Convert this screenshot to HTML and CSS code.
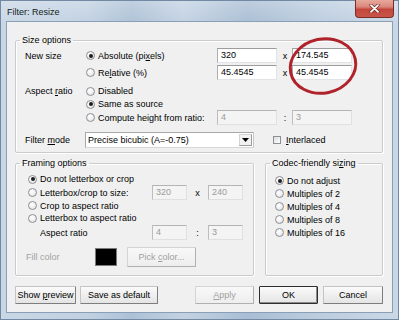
FILE: index.html
```html
<!DOCTYPE html>
<html>
<head>
<meta charset="utf-8">
<link rel="stylesheet" href="styles.css">
</head>
<body>
<div class="window">
  <div class="titlebar">
    <span class="title">Filter: Resize</span>
    <div class="close">
      <svg width="11" height="9" viewBox="0 0 11 9"><path d="M2 1.2 L9 7.8 M9 1.2 L2 7.8" stroke="#6b2a26" stroke-width="3.2" stroke-linecap="round"/><path d="M2 1.2 L9 7.8 M9 1.2 L2 7.8" stroke="#fff" stroke-width="1.8" stroke-linecap="round"/></svg>
    </div>
  </div>
  <div class="client">
    <fieldset class="group size">
      <legend>Size options</legend>
      <div class="gbody size-body">
        <div class="row r1">
          <span class="lbl">New size</span>
          <span class="opt"><span class="rb on"></span><span>Absolute (pi<u>x</u>els)</span></span>
          <span class="tb w60">320</span><span class="sep s15">x</span><span class="tb w60">174.545</span>
        </div>
        <div class="row r2">
          <span class="lbl"></span>
          <span class="opt"><span class="rb"></span><span>Re<u>l</u>ative (%)</span></span>
          <span class="tb w60">45.4545</span><span class="sep s15">x</span><span class="tb w60">45.4545</span>
        </div>
        <div class="row r3">
          <span class="lbl">Aspect <u>r</u>atio</span>
          <span class="opt"><span class="rb"></span><span>Disabled</span></span>
        </div>
        <div class="row r4">
          <span class="lbl"></span>
          <span class="opt"><span class="rb on"></span><span>Same as source</span></span>
        </div>
        <div class="row r5">
          <span class="lbl"></span>
          <span class="opt"><span class="rb"></span><span>Compute height from ratio:</span></span>
          <span class="tb w60 dis">4</span><span class="sep s15">:</span><span class="tb w60 dis">3</span>
        </div>
        <div class="row r6">
          <span class="lbl">Filter <u>m</u>ode</span>
          <div class="select"><span class="sel-text">Precise bicubic (A=-0.75)</span><span class="arrow"><svg width="7" height="4" viewBox="0 0 7 4"><path d="M0 0 H7 L3.5 4 Z" fill="#000"/></svg></span></div>
          <span class="cb"></span><span class="cb-text"><u>I</u>nterlaced</span>
        </div>
      </div>
    </fieldset>
    <div class="mid">
      <fieldset class="group framing">
        <legend>Framing options</legend>
        <div class="gbody framing-body">
          <div class="row f1"><span class="fopt"><span class="rb on"></span><span>Do not letterbox or crop</span></span></div>
          <div class="row f2"><span class="fopt"><span class="rb"></span><span>Letterbox/crop to size:</span></span><span class="tb w35 dis">320</span><span class="sep s21">x</span><span class="tb w35 dis">240</span></div>
          <div class="row f3"><span class="fopt"><span class="rb"></span><span>Crop to aspect ratio</span></span></div>
          <div class="row f4"><span class="fopt"><span class="rb"></span><span>Letterbox to aspect ratio</span></span></div>
          <div class="row f5"><span class="fopt indent">Aspect ratio</span><span class="tb w35 dis">4</span><span class="sep s21">:</span><span class="tb w35 dis">3</span></div>
          <div class="row f6"><span class="fill-lbl">Fill color</span><span class="swatch"></span><span class="btn dbtn pick"><span>Pick <u>c</u>olor...</span></span></div>
        </div>
      </fieldset>
      <fieldset class="group codec">
        <legend>Codec-friendly si<u>z</u>ing</legend>
        <div class="gbody codec-body">
          <div class="row c"><span class="rb on"></span><span>Do not adjust</span></div>
          <div class="row c"><span class="rb"></span><span>Multiples of 2</span></div>
          <div class="row c"><span class="rb"></span><span>Multiples of 4</span></div>
          <div class="row c"><span class="rb"></span><span>Multiples of 8</span></div>
          <div class="row c"><span class="rb"></span><span>Multiples of 16</span></div>
        </div>
      </fieldset>
    </div>
    <div class="buttons">
      <span class="btn b-preview"><span>Show <u>p</u>review</span></span>
      <span class="btn b-save"><span>Save as default</span></span>
      <span class="btn dbtn b-apply"><span><u>A</u>pply</span></span>
      <span class="btn b-ok"><span>OK</span></span>
      <span class="btn b-cancel"><span>Cancel</span></span>
    </div>
  </div>
  <svg class="mark" width="399" height="320" viewBox="0 0 399 320"><ellipse cx="323" cy="66" rx="33" ry="27" transform="rotate(-12 323 66)" fill="none" stroke="#b0232c" stroke-width="3"/></svg>
</div>
</body>
</html>
```
FILE: styles.css
```css
* { box-sizing: border-box; }
body {
  margin: 0;
  font-family: "Liberation Sans", Arial, sans-serif;
  font-size: 9px;
  color: #000;
}
u { text-decoration: underline; text-underline-offset: 1px; }

.window {
  position: relative;
  width: 399px;
  height: 320px;
  overflow: hidden;
  display: flex;
  flex-direction: column;
  background:
    linear-gradient(180deg, rgba(255,255,255,0.25), rgba(255,255,255,0) 24px),
    linear-gradient(90deg, #c9d7e5 0%, #c1d1e2 22%, #adc1d6 33%, #c3d2e2 46%, #a9bed4 62%, #bccddf 80%, #cad8e6 100%);
  box-shadow: inset 0 0 0 1px #7189a3;
}

.titlebar {
  height: 21px;
  display: flex;
  align-items: center;
  padding-left: 7px;
}
.title {
  font-size: 9px;
  color: #141a22;
  margin-top: 3px;
}
.close {
  margin-left: auto;
  margin-right: 5px;
  align-self: flex-start;
  width: 39px;
  height: 18px;
  border: 1px solid #7c2b26;
  border-top: 0;
  border-radius: 0 0 4px 4px;
  background: linear-gradient(180deg, #e7a99c 0%, #d9887b 40%, #c4463b 55%, #c8554a 100%);
  display: flex;
  align-items: center;
  justify-content: center;
}

.client {
  flex: 1;
  margin: 0 6px 7px 6px;
  background: #f0f0f0;
  border: 1px solid #8ba0b7;
  padding: 12px 9px 0 8px;
  display: flex;
  flex-direction: column;
}

.group {
  margin: 0;
  padding: 0;
  border: 1px solid #cbcbcb;
  box-shadow: inset 1px 1px 0 #fff, 1px 1px 0 #fff;
  border-radius: 2px;
  min-width: 0;
}
.group legend {
  margin-left: 4px;
  padding: 0 2px;
  line-height: 12px;
  font-size: 9px;
}

.row {
  display: flex;
  align-items: center;
  white-space: nowrap;
}

/* Size options */
.size-body { padding: 2px 9px 4px 9px; }
.r1 { height: 15px; }
.r2 { height: 15px; margin-top: 2px; }
.r3 { height: 14px; margin-top: 4px; }
.r4 { height: 12px; }
.r5 { height: 15px; }
.r6 { height: 16px; margin-top: 7px; }
.lbl { width: 60px; flex: none; }
.opt { width: 132px; flex: none; display: flex; align-items: center; }

/* radio button */
.rb {
  width: 9px;
  height: 9px;
  flex: none;
  border-radius: 50%;
  border: 1px solid #8c8f94;
  background: radial-gradient(circle at 40% 35%, #ffffff 0%, #f2f2f2 45%, #d8d8d8 100%);
  margin: 0 3px 0 1px;
  display: inline-flex;
  align-items: center;
  justify-content: center;
}
.rb.on::after {
  content: "";
  width: 4px;
  height: 4px;
  border-radius: 50%;
  background: #1d1d1d;
}

/* text boxes */
.tb {
  height: 15px;
  flex: none;
  background: #fff;
  border: 1px solid #e2e3e6;
  border-top-color: #9c9c9c;
  border-left-color: #adadad;
  padding-left: 3px;
  line-height: 13px;
}
.tb.dis {
  background: #f4f4f4;
  color: #9a9a9a;
  border-color: #e0e0e0;
  border-top-color: #b4b4b4;
  border-left-color: #bdbdbd;
}
.w60 { width: 60px; }
.w35 { width: 35px; }
.sep { flex: none; text-align: center; }
.s15 { width: 15px; padding-left: 1px; }
.s21 { width: 21px; }

/* dropdown */
.select {
  width: 169px;
  height: 16px;
  flex: none;
  display: flex;
  background: #fff;
  border: 1px solid #a8a8a8;
  border-right-color: #c8c8c8;
  border-bottom-color: #d8d8d8;
}
.sel-text { flex: 1; padding-left: 2px; line-height: 14px; }
.arrow {
  width: 13px;
  margin: 1px 1px 1px 0;
  background: #f2f2f2;
  border: 1px solid #d4d4d4;
  border-right-color: #9c9c9c;
  border-bottom-color: #9c9c9c;
  display: flex;
  align-items: center;
  justify-content: center;
}
.cb {
  width: 8px;
  height: 8px;
  flex: none;
  margin-left: 19px;
  margin-right: 5px;
  border: 1px solid #8c8f94;
  background: linear-gradient(135deg, #dcdcdc, #ffffff);
}

/* Framing */
.mid {
  display: flex;
  gap: 11px;
  margin-top: 4px;
}
.framing { width: 239px; flex: none; }
.codec { flex: 1; }
.framing-body { padding: 4px 6px 8px 11px; }
.f1 { height: 12px; }
.f2 { height: 15px; }
.f3 { height: 11px; }
.f4 { height: 14px; }
.f5 { height: 15px; }
.f6 { height: 20px; margin-top: 7px; }
.fopt { width: 125px; flex: none; display: flex; align-items: center; }
.fopt.indent { padding-left: 13px; }
.fill-lbl { width: 69px; margin-left: -1px; color: #a3a3a3; flex: none; }
.swatch {
  width: 22px;
  height: 18px;
  flex: none;
  background: #000;
  border: 1px solid #7a7a7a;
  margin-right: 10px;
}

/* Codec */
.codec-body { padding: 5px 4px 4px 8px; }
.c { height: 13px; }

/* buttons */
.btn {
  height: 18px;
  flex: none;
  display: inline-flex;
  align-items: center;
  justify-content: center;
  white-space: nowrap;
  background: linear-gradient(180deg, #fbfbfb 0%, #efefef 50%, #e4e4e4 100%);
  border: 1px solid #c4c4c4;
  border-right-color: #7e7e7e;
  border-bottom-color: #7e7e7e;
  border-radius: 1px;
}
.dbtn {
  color: #a0a0a0;
  border-color: #d4d4d4;
  border-right-color: #b0b0b0;
  border-bottom-color: #b0b0b0;
  background: linear-gradient(180deg, #f8f8f8, #eeeeee);
}
.pick { width: 69px; height: 20px; }
.buttons {
  display: flex;
  margin-top: 10px;
}
.b-preview { width: 61px; }
.b-save { width: 78px; margin-left: 4px; }
.b-apply { width: 59px; margin-left: auto; }
.b-ok {
  width: 59px;
  margin-left: 5px;
  border: 1px solid #2e2e2e;
  box-shadow: inset -1px -1px 0 #8a8a8a;
}
.b-cancel { width: 60px; margin-left: 5px; }

.mark {
  position: absolute;
  left: 0;
  top: 0;
  pointer-events: none;
}
```
